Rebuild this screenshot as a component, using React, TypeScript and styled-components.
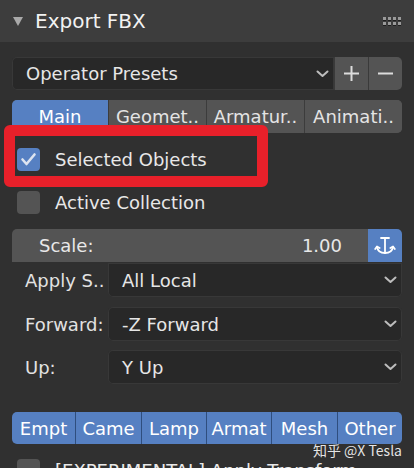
import React from 'react';
import styled, { createGlobalStyle } from 'styled-components';

const Global = createGlobalStyle`
  html, body { margin: 0; padding: 0; background: #303030; }
  body { font-family: "DejaVu Sans", "Noto Sans CJK SC", sans-serif; }
  * { box-sizing: border-box; }
`;

const Panel = styled.div`
  position: relative;
  width: 414px;
  height: 468px;
  overflow: hidden;
  background: #303030;
  color: #e6e6e6;
  font-size: 18px;
`;

const Header = styled.div`
  height: 42px;
  background: #3d3d3d;
  display: flex;
  align-items: center;
  padding: 0 13px 0 13px;
`;

const Triangle = styled.span`
  width: 0;
  height: 0;
  border-left: 5.5px solid transparent;
  border-right: 5.5px solid transparent;
  border-top: 9px solid #a9a9a9;
  margin-right: 12px;
  margin-top: 1px;
`;

const Title = styled.span`
  font-size: 20px;
  color: #f2f2f2;
`;

const Grip = styled.div`
  margin-left: auto;
  display: grid;
  grid-template-columns: repeat(4, 3px);
  grid-auto-rows: 3px;
  gap: 2px 2px;
`;

const GripDot = styled.span`
  background: #9a9a9a;
  box-shadow: 0 1px 0 #1e1e1e;
`;

const Content = styled.div`
  padding: 15px 12px 0 12px;
  display: flex;
  flex-direction: column;
`;

const PresetRow = styled.div`
  display: flex;
  height: 33px;
`;

const Select = styled.div<{ $radius?: string }>`
  flex: 1;
  display: flex;
  align-items: center;
  background: #282828;
  border-radius: ${(p) => p.$radius || '5px'};
  box-shadow: inset 0 0 0 1px #383838;
  padding: 0 5px 0 14px;
  color: #e6e6e6;
`;

const SelectText = styled.span`
  flex: 1;
  white-space: nowrap;
`;

const IconButton = styled.div<{ $last?: boolean }>`
  width: 34px;
  display: flex;
  align-items: center;
  justify-content: center;
  background: #545454;
  border-left: 1px solid #3a3a3a;
  border-radius: ${(p) => (p.$last ? '0 5px 5px 0' : '0')};
`;

const Tabs = styled.div`
  margin-top: 10px;
  height: 33px;
  display: grid;
  grid-template-columns: 96fr 98fr 98fr 98fr;
  border-radius: 5px;
  overflow: hidden;
  background: #545454;
`;

const Tab = styled.div<{ $active?: boolean }>`
  display: flex;
  align-items: center;
  justify-content: center;
  background: ${(p) => (p.$active ? '#5680c2' : '#545454')};
  color: ${(p) => (p.$active ? '#ffffff' : '#e4e4e4')};
  border-left: ${(p) => (p.$active ? 'none' : '1px solid #3c3c3c')};
  white-space: nowrap;
  overflow: hidden;
`;

const CheckRow = styled.div<{ $mt?: number }>`
  height: 43px;
  margin-top: ${(p) => p.$mt ?? 0}px;
  display: flex;
  align-items: center;
  padding-left: 5px;
  color: #e8e8e8;
  white-space: nowrap;
`;

const Box = styled.div<{ $on?: boolean }>`
  width: 23px;
  height: 23px;
  border-radius: 4px;
  background: ${(p) => (p.$on ? '#5680c2' : '#545454')};
  margin-right: 15px;
  flex-shrink: 0;
  display: flex;
  align-items: center;
  justify-content: center;
`;

const ScaleRow = styled.div`
  margin-top: 5px;
  height: 33px;
  display: flex;
`;

const ScaleField = styled.div`
  flex: 1;
  display: flex;
  align-items: center;
  justify-content: space-between;
  background: #545454;
  border-radius: 5px 0 0 0;
  padding: 0 26px 0 27px;
  color: #e8e8e8;
`;

const ScaleButton = styled.div`
  width: 34px;
  display: flex;
  align-items: center;
  justify-content: center;
  background: #5680c2;
  border-radius: 0 5px 0 0;
`;

const PropRow = styled.div<{ $mt: number }>`
  margin-top: ${(p) => p.$mt}px;
  height: 34px;
  display: flex;
`;

const Label = styled.div`
  width: 96px;
  padding-left: 13px;
  display: flex;
  align-items: center;
  color: #e2e2e2;
  white-space: nowrap;
`;

const TypeRow = styled.div`
  margin-top: 28px;
  height: 32px;
  display: grid;
  grid-template-columns: 63fr 66fr 65fr 65fr 66fr 65fr;
  border-radius: 5px;
  overflow: hidden;
  background: #5680c2;
`;

const TypeButton = styled.div<{ $first?: boolean }>`
  display: flex;
  align-items: center;
  justify-content: center;
  color: #ffffff;
  border-left: ${(p) => (p.$first ? 'none' : '1px solid #2f4e7e')};
  white-space: nowrap;
  overflow: hidden;
`;

const Highlight = styled.div`
  position: absolute;
  left: 4px;
  top: 125px;
  width: 264px;
  height: 62px;
  border: 11px solid #e8202a;
  border-radius: 6px;
  pointer-events: none;
`;

const Watermark = styled.div`
  position: absolute;
  right: 12px;
  top: 440px;
  font-family: "Noto Sans CJK SC", "DejaVu Sans", sans-serif;
  font-size: 14px;
  color: rgba(255, 255, 255, 0.88);
  white-space: nowrap;
`;

const Chevron = () => (
  <svg width="13" height="8" viewBox="0 0 13 8">
    <polyline points="1.5,1.5 6.5,6 11.5,1.5" fill="none" stroke="#bdbdbd" strokeWidth="2" strokeLinecap="round" strokeLinejoin="round" />
  </svg>
);

const Plus = () => (
  <svg width="17" height="17" viewBox="0 0 17 17">
    <path d="M8.5 1 V16 M1 8.5 H16" stroke="#dcdcdc" strokeWidth="2" />
  </svg>
);

const Minus = () => (
  <svg width="17" height="17" viewBox="0 0 17 17">
    <path d="M1 8.5 H16" stroke="#dcdcdc" strokeWidth="2" />
  </svg>
);

const Check = () => (
  <svg width="23" height="23" viewBox="0 0 23 23">
    <polyline points="5.5,11.5 9.5,16 17.5,6.5" fill="none" stroke="#dde4f0" strokeWidth="2.6" strokeLinecap="round" strokeLinejoin="round" />
  </svg>
);

const UnitScaleIcon = () => (
  <svg width="22" height="20" viewBox="0 0 22 20">
    <g fill="none" stroke="#ffffff" strokeWidth="1.8" strokeLinecap="round" strokeLinejoin="round">
      <path d="M7 2 H15" />
      <path d="M11 2 V17" />
      <path d="M3 11 Q4 17 11 17 Q18 17 19 11" />
      <path d="M1.2 13 L3 10.5 L5.6 12" />
      <path d="M20.8 13 L19 10.5 L16.4 12" />
    </g>
  </svg>
);

const tabs = ['Main', 'Geomet..', 'Armatur..', 'Animati..'];
const types = ['Empt', 'Came', 'Lamp', 'Armat', 'Mesh', 'Other'];

export default function App() {
  return (
    <>
      <Global />
      <Panel>
        <Header>
          <Triangle />
          <Title>Export FBX</Title>
          <Grip>
            {Array.from({ length: 8 }).map((_, i) => (
              <GripDot key={i} />
            ))}
          </Grip>
        </Header>
        <Content>
          <PresetRow>
            <Select $radius="5px 0 0 5px">
              <SelectText>Operator Presets</SelectText>
              <Chevron />
            </Select>
            <IconButton>
              <Plus />
            </IconButton>
            <IconButton $last>
              <Minus />
            </IconButton>
          </PresetRow>
          <Tabs>
            {tabs.map((t, i) => (
              <Tab key={t} $active={i === 0}>
                {t}
              </Tab>
            ))}
          </Tabs>
          <CheckRow $mt={5}>
            <Box $on>
              <Check />
            </Box>
            Selected Objects
          </CheckRow>
          <CheckRow>
            <Box />
            Active Collection
          </CheckRow>
          <ScaleRow>
            <ScaleField>
              <span>Scale:</span>
              <span>1.00</span>
            </ScaleField>
            <ScaleButton>
              <UnitScaleIcon />
            </ScaleButton>
          </ScaleRow>
          <PropRow $mt={1}>
            <Label>Apply S..</Label>
            <Select $radius="0 0 5px 5px">
              <SelectText>All Local</SelectText>
              <Chevron />
            </Select>
          </PropRow>
          <PropRow $mt={10}>
            <Label>Forward:</Label>
            <Select>
              <SelectText>-Z Forward</SelectText>
              <Chevron />
            </Select>
          </PropRow>
          <PropRow $mt={9}>
            <Label>Up:</Label>
            <Select>
              <SelectText>Y Up</SelectText>
              <Chevron />
            </Select>
          </PropRow>
          <TypeRow>
            {types.map((t, i) => (
              <TypeButton key={t} $first={i === 0}>
                {t}
              </TypeButton>
            ))}
          </TypeRow>
          <CheckRow $mt={5}>
            <Box />
            [EXPERIMENTAL] Apply Transform
          </CheckRow>
        </Content>
        <Highlight />
        <Watermark>知乎 @X Tesla</Watermark>
      </Panel>
    </>
  );
}
